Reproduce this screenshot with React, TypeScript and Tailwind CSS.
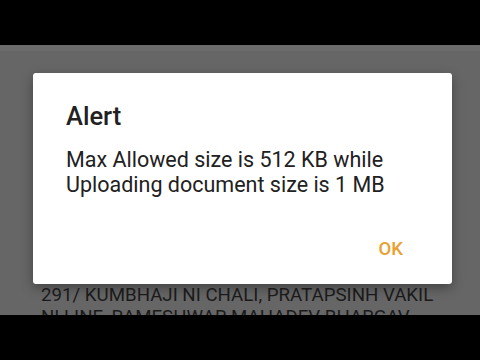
export default function App() {
  return (
    <div
      className="w-[480px] h-[360px] bg-black flex flex-col overflow-hidden"
      style={{ fontFamily: 'Roboto, "Noto Sans", sans-serif' }}
    >
      <div className="h-[45px] shrink-0 bg-black" />
      <div className="h-[270px] shrink-0 bg-[#666666] overflow-hidden flex flex-col">
        <div className="h-[6px] shrink-0 bg-[#6b6b6b]" />
        <div className="pt-[22px] pl-[33px] pr-[28px]">
          <div className="bg-white rounded-[3px] h-[211px] shadow-[0_4px_12px_rgba(0,0,0,0.35)] pl-[33px] pr-[47px] pt-[28px] flex flex-col">
            <div className="text-[25.5px] leading-[30px] font-medium text-[#212121]">Alert</div>
            <div className="mt-[16px] text-[21.5px] leading-[25px] text-[#212121]">
              Max Allowed size is 512 KB while
              <br />
              Uploading document size is 1 MB
            </div>
            <div className="mt-auto mb-[24px] mr-[2px] self-end text-[18.5px] leading-[22px] font-medium text-[#e8a030]">
              OK
            </div>
          </div>
        </div>
        <div className="pl-[41px] text-[18.7px] leading-[22px] text-[#1a1a1a] whitespace-nowrap">
          291/ KUMBHAJI NI CHALI, PRATAPSINH VAKIL
          <br />
          NI LINE, RAMESHWAR MAHADEV BHARGAV
        </div>
      </div>
      <div className="flex-1 bg-black" />
    </div>
  );
}
